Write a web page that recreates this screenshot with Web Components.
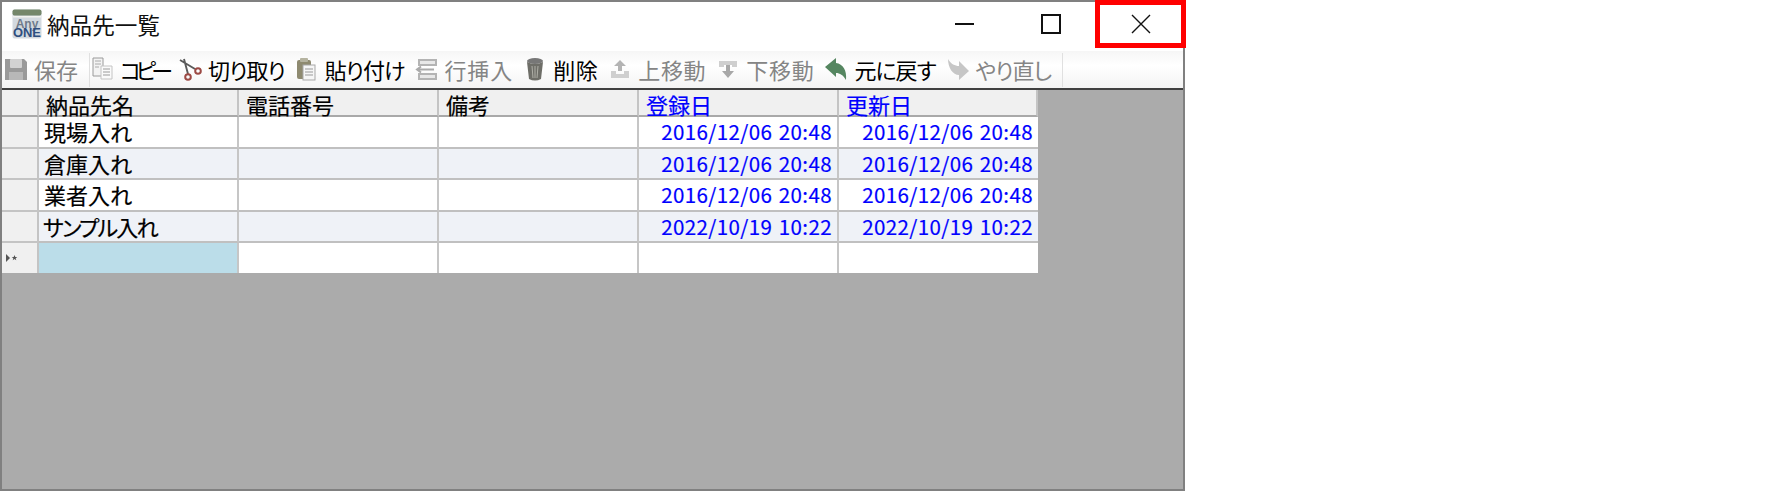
<!DOCTYPE html>
<html lang="ja">
<head>
<meta charset="utf-8">
<title>納品先一覧</title>
<style>
  html, body { margin: 0; background: #fff; }
  body { font-family: "Noto Sans CJK JP", "Liberation Sans", sans-serif; font-feature-settings: "palt"; }
</style>
</head>
<body>
<app-window>
  <title-bar slot="title" caption="納品先一覧"></title-bar>
  <tool-bar slot="tools">
    <tool-button icon="save" disabled>保存</tool-button>
    <tool-sep></tool-sep>
    <tool-button icon="copy" spacing="-5">コピー</tool-button>
    <tool-button icon="cut" spacing="-1">切り取り</tool-button>
    <tool-button icon="paste" spacing="-1">貼り付け</tool-button>
    <tool-button icon="insert" spacing=".9" disabled>行挿入</tool-button>
    <tool-button icon="trash" spacing=".5">削除</tool-button>
    <tool-button icon="up" spacing=".7" disabled>上移動</tool-button>
    <tool-button icon="down" spacing=".7" disabled>下移動</tool-button>
    <tool-button icon="undo" spacing="-1">元に戻す</tool-button>
    <tool-button icon="redo" spacing="-1" disabled>やり直し</tool-button>
    <tool-sep></tool-sep>
  </tool-bar>
  <data-grid slot="body"></data-grid>
</app-window>

<script>
// outer window: grey frame, title, toolbar, then the dark client area
class AppWindow extends HTMLElement {
  constructor() {
    super();
    this.attachShadow({mode: 'open'});
  }
  connectedCallback() {
    this.shadowRoot.innerHTML = `
    <style>
      :host {
        display: flex;
        flex-direction: column;
        box-sizing: border-box;
        width: 1185px;
        height: 491px;
        border: 2px solid #808080;
        background: #fff;
      }
      .body { flex: 1; background: #ababab; border-top: 2px solid #404040; min-height: 0; }
    </style>
    <slot name="title"></slot>
    <slot name="tools"></slot>
    <div class="body"><slot name="body"></slot></div>
    `;
  }
}

class TitleBar extends HTMLElement {
  constructor() {
    super();
    this.attachShadow({mode: 'open'});
  }
  connectedCallback() {
    this.shadowRoot.innerHTML = `
    <style>
      :host { display: flex; align-items: center; height: 49px; position: relative; }
      .logo { margin: 0 5px 5px 10px; width: 30px; height: 30px; flex: none; }
      .cap { font-size: 22.6px; color: #111; flex: 1; padding-bottom: 4px; font-feature-settings: normal; }
      .btn { width: 86px; height: 44px; align-self: flex-start; display: flex; align-items: center; justify-content: center; }
      .btn svg { display: block; }
      .btn.last { margin-right: 89px; }
      /* red box drawn over the close button */
      .close {
        position: absolute; right: -3px; top: -2px;
        box-sizing: border-box; width: 91px; height: 48px;
        border: 5px solid #f00;
        display: flex; align-items: center; justify-content: center;
      }
    </style>
    <svg class="logo" viewBox="0 0 30 30">
      <rect x="0.5" y="0.5" width="29" height="29" rx="2" fill="#d3d9df"/>
      <rect x="0.5" y="0.5" width="29" height="6" rx="2" fill="#75876a"/>
      <rect x="1" y="7" width="28" height="1.500" fill="#f2f2ee"/>
      <text x="15" y="18.500" font-family="Liberation Sans" font-size="12" font-weight="700" fill="#6f7b8b" text-anchor="middle">Any</text>
      <text x="15" y="28" font-family="Liberation Sans" font-size="12" font-weight="700" fill="#2f4f7f" text-anchor="middle" textLength="28" lengthAdjust="spacingAndGlyphs">ONE</text>
    </svg>
    <div class="cap">${this.getAttribute('caption')}</div>
    <div class="btn">
      <svg width="20" height="20"><rect x="0" y="9" width="19" height="2" fill="#111"/></svg>
    </div>
    <div class="btn last">
      <svg width="20" height="20"><rect x="1" y="1" width="18" height="18" fill="none" stroke="#111" stroke-width="2"/></svg>
    </div>
    <div class="close">
      <svg width="20" height="20"><path d="M1 1 L19 19 M19 1 L1 19" stroke="#111" stroke-width="1.4" fill="none"/></svg>
    </div>
    `;
  }
}

class ToolBar extends HTMLElement {
  constructor() {
    super();
    this.attachShadow({mode: 'open'});
  }
  connectedCallback() {
    this.shadowRoot.innerHTML = `
    <style>
      :host {
        display: flex; align-items: stretch; height: 37px; box-sizing: border-box;
        background: linear-gradient(#f6f6f6, #ffffff 40%, #f4f4f4);
        padding-left: 2px;
      }
    </style>
    <slot></slot>
    `;
  }
}

class ToolSep extends HTMLElement {
  constructor() {
    super();
    this.attachShadow({mode: 'open'});
  }
  connectedCallback() {
    this.shadowRoot.innerHTML = `
    <style>:host { display: block; width: 1px; margin: 2px 0 1px 1px; background: #e0e0e0; }</style>
    `;
  }
}

const ICONS = {
  save: `<path d="M1 2h19l3 3v18H1z" fill="#9a9a9a"/><rect x="6" y="2" width="12" height="9" rx="1" fill="#d2d2d2"/><rect x="5" y="15" width="14" height="8" fill="#b8b8b8"/>`,
  copy: `<path d="M3 1h10v18H3z" fill="#f3f3f3" stroke="#9a9a9a"/><path d="M5 4h6M5 7h6M5 10h4" stroke="#aaa"/><path d="M11 9h11v13H11z" fill="#fafafa" stroke="#c4c4c4"/><path d="M13 12h7M13 15h7M13 18h7" stroke="#9a9a9a"/>`,
  cut: `<path d="M2 3 L17 12 M6 2 L10 17" stroke="#5a5a5a" stroke-width="1.900" fill="none"/><circle cx="10" cy="20" r="2.800" fill="none" stroke="#9c4a45" stroke-width="2"/><circle cx="20" cy="14" r="2.800" fill="none" stroke="#9c4a45" stroke-width="2"/>`,
  paste: `<rect x="2" y="3" width="14" height="19" rx="2" fill="#8e8a70"/><rect x="5" y="1" width="8" height="4" rx="1" fill="#b5b3a0"/><rect x="8" y="8" width="12" height="15" fill="#f6f6f6" stroke="#a8a8a8"/><path d="M10 12h8M10 15h8M10 18h8" stroke="#999"/>`,
  insert: `<rect x="5" y="3" width="17" height="5" fill="#e8e8e8" stroke="#b4b4b4" stroke-width="2"/><rect x="5" y="17" width="17" height="5" fill="#e8e8e8" stroke="#b4b4b4" stroke-width="2"/><path d="M3 12.500h17M7 9.500l-4 3 4 3" stroke="#aaa" stroke-width="2" fill="none"/>`,
  trash: `<ellipse cx="12" cy="4" rx="8" ry="3" fill="#777"/><path d="M4 5l2 17q6 3 12 0l2-17q-8 4-16 0z" fill="#6e6e68"/><path d="M9 9l1 12M12 9v12M15 9l-1 12" stroke="#b0b0a8"/>`,
  up: `<path d="M12 3l6 6h-4v5h-4V9H6z" fill="#b4b4b4"/><path d="M3 14h5v3h8v-3h5v7H3z" fill="#cfcfcf"/>`,
  down: `<path d="M3 4h18v6h-5v-2H8v2H3z" fill="#cfcfcf"/><path d="M10 8h4v6h4l-6 7-6-7h4z" fill="#a8a8a8"/>`,
  undo: `<path d="M1 10 L12 1 V6 C19 7 23 13 22 23 C19 18 16 16 12 16 V20 Z" fill="#558660"/>`,
  redo: `<path d="M23 14 L13 23 V18 C7 18 2 11 2 2 C5 7 9 9 13 9 V4 Z" fill="#c6c6c6"/>`
};

class ToolButton extends HTMLElement {
  constructor() {
    super();
    this.attachShadow({mode: 'open'});
  }
  connectedCallback() {
    const off = this.hasAttribute('disabled');
    const spacing = this.getAttribute('spacing') || 0;
    this.shadowRoot.innerHTML = `
    <style>
      :host {
        display: flex; align-items: center; gap: 6px; padding: 0 10px 2px 0;
        font-size: 22px; letter-spacing: ${spacing}px; color: ${off ? '#858585' : '#000'};
      }
      svg { flex: none; width: 24px; height: 24px; }
    </style>
    <svg viewBox="0 0 24 24">${ICONS[this.getAttribute('icon')]}</svg>
    <slot></slot>
    `;
  }
}

const HEADERS = [
  {label: '納品先名'},
  {label: '電話番号'},
  {label: '備考'},
  {label: '登録日', blue: true},
  {label: '更新日', blue: true}
];

const ROWS = [
  ['現場入れ', '', '', '2016/12/06 20:48', '2016/12/06 20:48'],
  ['倉庫入れ', '', '', '2016/12/06 20:48', '2016/12/06 20:48'],
  ['業者入れ', '', '', '2016/12/06 20:48', '2016/12/06 20:48'],
  ['サンプル入れ', '', '', '2022/10/19 10:22', '2022/10/19 10:22'],
  ['', '', '', '', '']
];

class DataGrid extends HTMLElement {
  constructor() {
    super();
    this.attachShadow({mode: 'open'});
  }
  connectedCallback() {
    let cells = '<div class="hd corner"></div>';
    HEADERS.forEach((h) => {
      cells += `<div class="hd ${h.blue ? 'blue' : ''}">${h.label}</div>`;
    });
    ROWS.forEach((row, r) => {
      const isNew = r === ROWS.length - 1;
      const end = isNew ? ' end' : '';
      cells += `<div class="rh${end}">${isNew ? '<svg width="12" height="8" viewBox="0 0 12 8"><path d="M0 0l4 4-4 4z" fill="#555"/><path d="M8.500 1l.8 2h2l-1.600 1.300.6 2-1.800-1.200-1.800 1.200.6-2L5.700 3h2z" fill="#555"/></svg>' : ''}</div>`;
      row.forEach((val, c) => {
        let cls = 'c' + end;
        if (r % 2 === 1) cls += ' alt';
        if (c >= 3) cls += ' date';
        if (isNew && c === 0) cls += ' cur';
        // katakana runs narrower in the original font
        if (val === 'サンプル入れ') cls += ' kana';
        cells += `<div class="${cls}">${val}</div>`;
      });
    });
    this.shadowRoot.innerHTML = `
    <style>
      :host { display: block; width: 1036px; }
      .grid {
        display: grid;
        grid-template-columns: 37px repeat(4, 200px) 199px;
        grid-template-rows: 27px 32px 31px 32px 31px 30px;
        font-size: 22px;
        color: #000;
        -webkit-text-stroke: .2px currentColor;
      }
      .grid > div { box-sizing: border-box; white-space: nowrap; }
      .hd {
        background: #f0f0f0;
        border-right: 2px solid #c4c4c4;
        border-bottom: 2px solid #a9a9a9;
        padding: 3px 0 0 7px;
        line-height: 22px;
      }
      .hd.corner { padding: 0; }
      .hd:last-child { border-right: 0; }
      .hd.blue { color: #0000ff; }
      .rh {
        background: #f0f0f0;
        border-right: 2px solid #c4c4c4;
        border-bottom: 2px solid #c4c4c4;
        display: flex; align-items: center; padding-left: 4px;
      }
      .c {
        background: #fff;
        border-right: 2px solid #c6c6c6;
        border-bottom: 2px solid #c0c0c0;
        padding-left: 5px;
        line-height: 28px;
      }
      .c:nth-child(6n) { border-right: 0; }
      .grid > .end { border-bottom: 0; }
      .c.alt { background: #eff2f7; }
      .c.cur { background: #bbdde9; }
      .c.kana { letter-spacing: -1.8px; padding-left: 4px; }
      .c.date {
        color: #0000ff; text-align: right; padding: 0 5px 0 0;
        font-size: 20.5px; letter-spacing: .4px; word-spacing: 1.5px;
      }
    </style>
    <div class="grid">${cells}</div>
    `;
  }
}

customElements.define('app-window', AppWindow);
customElements.define('title-bar', TitleBar);
customElements.define('tool-bar', ToolBar);
customElements.define('tool-sep', ToolSep);
customElements.define('tool-button', ToolButton);
customElements.define('data-grid', DataGrid);
</script>
</body>
</html>
